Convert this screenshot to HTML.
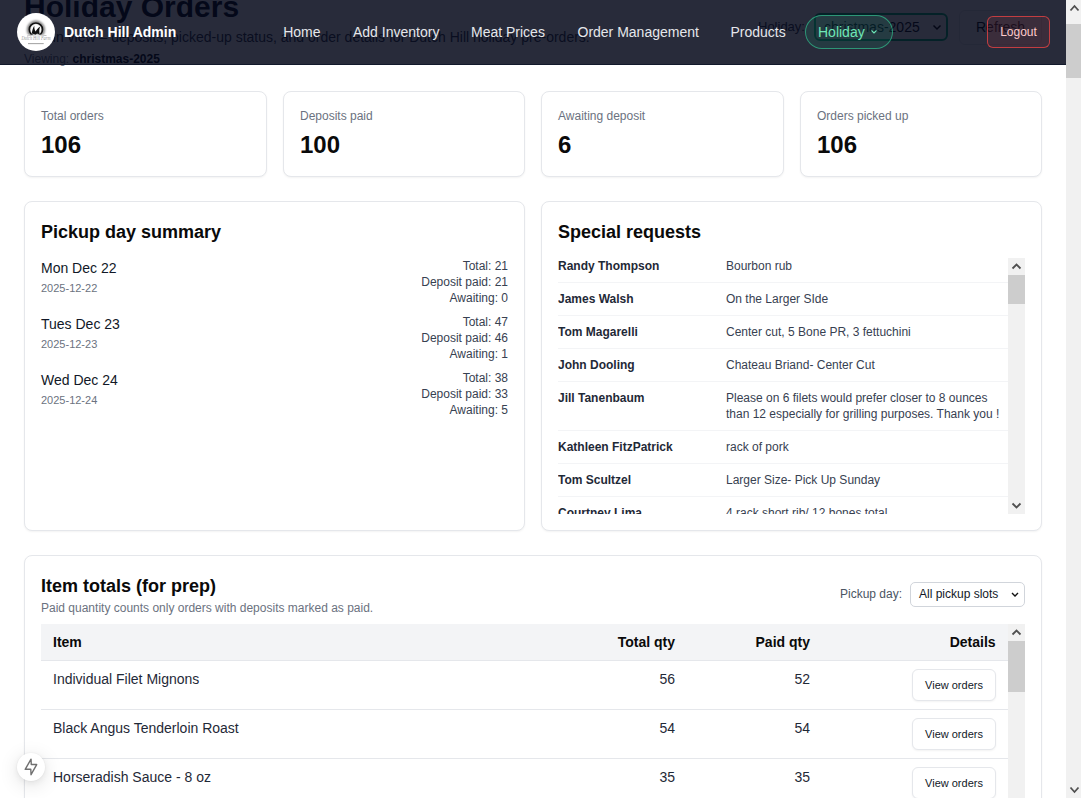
<!DOCTYPE html>
<html><head><meta charset="utf-8">
<style>
*{box-sizing:border-box;margin:0;padding:0}
html,body{width:1081px;height:798px;overflow:hidden;background:#fff;font-family:"Liberation Sans",sans-serif;color:#111827}
.abs{position:absolute}
.card{position:absolute;background:#fff;border:1px solid #e5e7eb;border-radius:8px;box-shadow:0 1px 2px rgba(0,0,0,0.05)}
.lbl{font-size:12px;color:#6b7280;line-height:16px}
.big{font-size:24px;font-weight:700;color:#0a0a0a;line-height:32px}
.h2{position:absolute;left:16px;top:16px;font-size:18px;font-weight:700;color:#0a0a0a;line-height:28px}
/* pickup */
.prow{position:absolute;left:16px;width:467px;height:48px}
.pname{position:absolute;left:0;top:0;font-size:14px;line-height:20px;color:#111827}
.pdate{position:absolute;left:0;top:22px;font-size:11px;line-height:16px;color:#6b7280}
.pstat{position:absolute;right:0;top:0;font-size:12px;line-height:16px;color:#374151;text-align:right}
/* special */
.srow{position:absolute;left:0;width:450px;border-bottom:1px solid #f3f4f6}
.sname{position:absolute;left:0;font-size:12px;font-weight:700;line-height:16px;color:#1f2937}
.stext{position:absolute;left:168px;font-size:12px;line-height:16px;color:#374151;width:282px}
/* table */
.th{position:absolute;top:0;height:37px;font-size:14px;font-weight:700;line-height:20px;color:#0a0a0a}
.trow{position:absolute;left:0;width:967px;height:49px;border-bottom:1px solid #e5e7eb}
.td{position:absolute;top:8px;font-size:14px;line-height:20px;color:#1f2937}
.vbtn{position:absolute;left:871px;top:8px;width:84px;height:32px;border:1px solid #e5e7eb;border-radius:6px;background:#fff;font-size:11px;line-height:30px;text-align:center;color:#111827;box-shadow:0 1px 2px rgba(0,0,0,0.05)}
/* scrollbars */
.sbtrack{position:absolute;background:#f1f1f1}
.sbthumb{position:absolute;background:#cdcdcd}
/* nav */
#nav{position:absolute;left:0;top:0;width:1066px;height:65px;background:rgba(2,6,23,0.85);border-bottom:1px solid rgba(15,23,42,0.9)}
.navlink{position:absolute;top:22px;font-size:14px;line-height:20px;color:#e5e7eb}
</style></head><body>

<!-- page header (under nav) -->
<div class="abs" style="left:24px;top:-11px;font-size:30px;font-weight:700;color:#111827;line-height:36px">Holiday Orders</div>
<div class="abs" style="left:24px;top:27px;font-size:14px;color:#374151;line-height:20px">Admin view – deposits, picked-up status, and order details for Dutch Hill holiday pre-orders.</div>
<div class="abs" style="left:24px;top:51px;font-size:12px;color:#6b7280;line-height:16px">Viewing: <b style="color:#111827">christmas-2025</b></div>
<div class="abs" style="left:758px;top:19px;font-size:13px;color:#374151;line-height:16px">Holiday:</div>
<div class="abs" style="left:814px;top:13px;width:134px;height:28px;border:2px solid #10b981;border-radius:6px;background:#fff"></div>
<div class="abs" style="left:824px;top:17px;font-size:14px;color:#111827;line-height:20px">christmas-2025</div>
<svg class="abs" style="left:932px;top:23px" width="10" height="10"><polyline points="1.5,2.5 5,6 8.5,2.5" fill="none" stroke="#111" stroke-width="1.5"/></svg>
<div class="abs" style="left:959px;top:10px;width:83px;height:35px;border:1px solid #e5e7eb;border-radius:6px;background:#fff"></div>
<div class="abs" style="left:976px;top:17px;font-size:14px;color:#111827;line-height:20px">Refresh</div>

<!-- stat cards -->
<div class="card" style="left:24px;top:91px;width:243px;height:86px"><div class="abs lbl" style="left:16px;top:16px">Total orders</div><div class="abs big" style="left:16px;top:37px">106</div></div>
<div class="card" style="left:283px;top:91px;width:242px;height:86px"><div class="abs lbl" style="left:16px;top:16px">Deposits paid</div><div class="abs big" style="left:16px;top:37px">100</div></div>
<div class="card" style="left:541px;top:91px;width:243px;height:86px"><div class="abs lbl" style="left:16px;top:16px">Awaiting deposit</div><div class="abs big" style="left:16px;top:37px">6</div></div>
<div class="card" style="left:800px;top:91px;width:242px;height:86px"><div class="abs lbl" style="left:16px;top:16px">Orders picked up</div><div class="abs big" style="left:16px;top:37px">106</div></div>

<!-- pickup day summary -->
<div class="card" style="left:24px;top:201px;width:501px;height:330px">
  <div class="h2">Pickup day summary</div>
  <div class="prow" style="top:56px"><div class="pname">Mon Dec 22</div><div class="pdate">2025-12-22</div><div class="pstat">Total: 21<br>Deposit paid: 21<br>Awaiting: 0</div></div>
  <div class="prow" style="top:112px"><div class="pname">Tues Dec 23</div><div class="pdate">2025-12-23</div><div class="pstat">Total: 47<br>Deposit paid: 46<br>Awaiting: 1</div></div>
  <div class="prow" style="top:168px"><div class="pname">Wed Dec 24</div><div class="pdate">2025-12-24</div><div class="pstat">Total: 38<br>Deposit paid: 33<br>Awaiting: 5</div></div>
</div>

<!-- special requests -->
<div class="card" style="left:541px;top:201px;width:501px;height:330px">
  <div class="h2">Special requests</div>
  <div class="abs" style="left:16px;top:56px;width:467px;height:256px;overflow:hidden">
    <div class="srow" style="top:0;height:25px"><div class="sname" style="top:0">Randy Thompson</div><div class="stext" style="top:0">Bourbon rub</div></div>
    <div class="srow" style="top:25px;height:33px"><div class="sname" style="top:8px">James Walsh</div><div class="stext" style="top:8px">On the Larger SIde</div></div>
    <div class="srow" style="top:58px;height:33px"><div class="sname" style="top:8px">Tom Magarelli</div><div class="stext" style="top:8px">Center cut, 5 Bone PR, 3 fettuchini</div></div>
    <div class="srow" style="top:91px;height:33px"><div class="sname" style="top:8px">John Dooling</div><div class="stext" style="top:8px">Chateau Briand- Center Cut</div></div>
    <div class="srow" style="top:124px;height:49px"><div class="sname" style="top:8px">Jill Tanenbaum</div><div class="stext" style="top:8px">Please on 6 filets would prefer closer to 8 ounces than 12 especially for grilling purposes. Thank you !</div></div>
    <div class="srow" style="top:173px;height:33px"><div class="sname" style="top:8px">Kathleen FitzPatrick</div><div class="stext" style="top:8px">rack of pork</div></div>
    <div class="srow" style="top:206px;height:33px"><div class="sname" style="top:8px">Tom Scultzel</div><div class="stext" style="top:8px">Larger Size- Pick Up Sunday</div></div>
    <div class="srow" style="top:239px;height:33px"><div class="sname" style="top:8px">Courtney Lima</div><div class="stext" style="top:8px">4 rack short rib/ 12 bones total</div></div>
    <div class="sbtrack" style="left:450px;top:0;width:17px;height:256px"></div>
    <div class="sbthumb" style="left:450px;top:17px;width:17px;height:29px"></div>
    <svg class="abs" style="left:450px;top:0" width="17" height="256"><polyline points="4.5,10.5 8.5,6.5 12.5,10.5" fill="none" stroke="#505050" stroke-width="1.8"/><polyline points="4.5,245.5 8.5,249.5 12.5,245.5" fill="none" stroke="#505050" stroke-width="1.8"/></svg>
  </div>
</div>

<!-- item totals -->
<div class="card" style="left:24px;top:555px;width:1018px;height:300px">
  <div class="h2" style="top:16px">Item totals (for prep)</div>
  <div class="abs" style="left:16px;top:44px;font-size:12px;line-height:16px;color:#6b7280">Paid quantity counts only orders with deposits marked as paid.</div>
  <div class="abs" style="left:815px;top:30px;font-size:12px;line-height:16px;color:#4b5563">Pickup day:</div>
  <div class="abs" style="left:885px;top:26px;width:115px;height:25px;border:1px solid #d1d5db;border-radius:5px;background:#fff"></div>
  <div class="abs" style="left:894px;top:30px;font-size:12px;line-height:16px;color:#111827">All pickup slots</div>
  <svg class="abs" style="left:985px;top:35px" width="10" height="8"><polyline points="2,2 5,5 8,2" fill="none" stroke="#111" stroke-width="1.4"/></svg>
  <div class="abs" style="left:16px;top:68px;width:984px;height:230px;overflow:hidden">
    <div class="abs" style="left:0;top:0;width:967px;height:37px;background:#f3f4f6;border-bottom:1px solid #e5e7eb"></div>
    <div class="th" style="left:12px;top:8px">Item</div>
    <div class="th" style="left:534px;width:100px;text-align:right;top:8px">Total qty</div>
    <div class="th" style="left:669px;width:100px;text-align:right;top:8px">Paid qty</div>
    <div class="th" style="left:854.6px;width:100px;text-align:right;top:8px">Details</div>
    <div class="trow" style="top:37px"><div class="td" style="left:12px">Individual Filet Mignons</div><div class="td" style="left:534px;width:100px;text-align:right">56</div><div class="td" style="left:669px;width:100px;text-align:right">52</div><div class="vbtn">View orders</div></div>
    <div class="trow" style="top:86px"><div class="td" style="left:12px">Black Angus Tenderloin Roast</div><div class="td" style="left:534px;width:100px;text-align:right">54</div><div class="td" style="left:669px;width:100px;text-align:right">54</div><div class="vbtn">View orders</div></div>
    <div class="trow" style="top:135px"><div class="td" style="left:12px">Horseradish Sauce - 8 oz</div><div class="td" style="left:534px;width:100px;text-align:right">35</div><div class="td" style="left:669px;width:100px;text-align:right">35</div><div class="vbtn">View orders</div></div>
    <div class="sbtrack" style="left:967px;top:0;width:17px;height:230px"></div>
    <div class="sbthumb" style="left:967px;top:17px;width:17px;height:51px"></div>
    <svg class="abs" style="left:967px;top:0" width="17" height="30"><polyline points="4.5,10.5 8.5,6.5 12.5,10.5" fill="none" stroke="#505050" stroke-width="1.8"/></svg>
  </div>
</div>

<!-- lightning dev button -->
<div class="abs" style="left:17px;top:753px;width:28px;height:28px;border-radius:50%;background:#fff;box-shadow:0 0 0 1px rgba(0,0,0,0.02),0 2px 6px rgba(0,0,0,0.06),0 4px 20px rgba(0,0,0,0.12)">
</div>
<svg class="abs" style="left:0;top:740px" width="60" height="58"><polygon points="31.04,19.15 25.18,29.3 30.8,29.3 31.04,34.7 36.68,24.56 31.27,24.56" fill="none" stroke="#707070" stroke-width="1.4" stroke-linejoin="round"/></svg>

<!-- nav overlay -->
<div id="nav">
  <svg class="abs" style="left:17px;top:13px" width="38" height="38" viewBox="0 0 38 38">
    <defs><filter id="bl" x="-50%" y="-50%" width="200%" height="200%"><feGaussianBlur stdDeviation="0.9"/></filter><clipPath id="cc"><rect x="0" y="0" width="38" height="21.8"/></clipPath></defs>
    <circle cx="19" cy="19" r="19" fill="#fff"/>
    <g clip-path="url(#cc)">
    <circle cx="18.9" cy="16.6" r="7.8" fill="none" stroke="#777" stroke-width="2.6" filter="url(#bl)"/>
    <circle cx="18.9" cy="16.6" r="6.6" fill="none" stroke="#111" stroke-width="1.7"/>
    </g>
    <path d="M14.8 20.5 C15.3 17 16 14.5 17.3 12.8 C17.2 15 17.6 17 18.6 18.6 C19.8 16.4 21.3 14.6 23.1 13.8 C22.2 16 22 18.5 22.8 21.6 C21.5 20.8 20.2 20.6 19.2 21.2 L18.2 22 C17.2 21 16 20.6 14.8 20.5 Z" fill="#111"/>
    <path d="M10 22.9 Q19 20.8 29.5 22.6" fill="none" stroke="#999" stroke-width="0.6"/>
    <text x="19" y="27.4" font-family="Liberation Serif" font-style="italic" font-size="6" text-anchor="middle" textLength="29" lengthAdjust="spacingAndGlyphs" fill="#9a9a9a">Dutch Hill Farm</text>
    <rect x="11" y="30.3" width="15.7" height="0.8" fill="#888"/>
  </svg>
  <div class="abs" style="left:64px;top:22px;font-size:14px;font-weight:700;line-height:20px;color:#fff">Dutch Hill Admin</div>
  <div class="navlink" style="left:283.2px">Home</div>
  <div class="navlink" style="left:353px">Add Inventory</div>
  <div class="navlink" style="left:471px">Meat Prices</div>
  <div class="navlink" style="left:577.5px">Order Management</div>
  <div class="navlink" style="left:730.5px">Products</div>
  <div class="abs" style="left:805px;top:15px;width:88px;height:34px;border-radius:17px;border:1px solid rgba(52,211,153,0.6);background:rgba(16,185,129,0.12)"></div>
  <div class="navlink" style="left:818px;color:#6ee7b7">Holiday</div>
  <svg class="abs" style="left:869.5px;top:28px" width="8" height="8"><polyline points="1.5,2.5 4,5 6.5,2.5" fill="none" stroke="#6ee7b7" stroke-width="1.1"/></svg>
  <div class="abs" style="left:987px;top:16px;width:63px;height:32px;border-radius:6px;border:1px solid rgba(239,68,68,0.75);background:rgba(239,68,68,0.1)"></div>
  <div class="abs" style="left:987px;top:24px;width:63px;text-align:center;font-size:12px;line-height:16px;color:#fecaca">Logout</div>
</div>

<!-- page scrollbar -->
<div class="sbtrack" style="left:1066px;top:0;width:15px;height:798px"></div>
<div class="sbthumb" style="left:1066px;top:24px;width:15px;height:54px"></div>
<svg class="abs" style="left:1066px;top:0" width="15" height="798"><polyline points="4.5,10.5 8.5,6 12.5,10.5" fill="none" stroke="#505050" stroke-width="1.8"/><polyline points="4.5,787.5 8.5,792 12.5,787.5" fill="none" stroke="#505050" stroke-width="1.8"/></svg>
</body></html>
